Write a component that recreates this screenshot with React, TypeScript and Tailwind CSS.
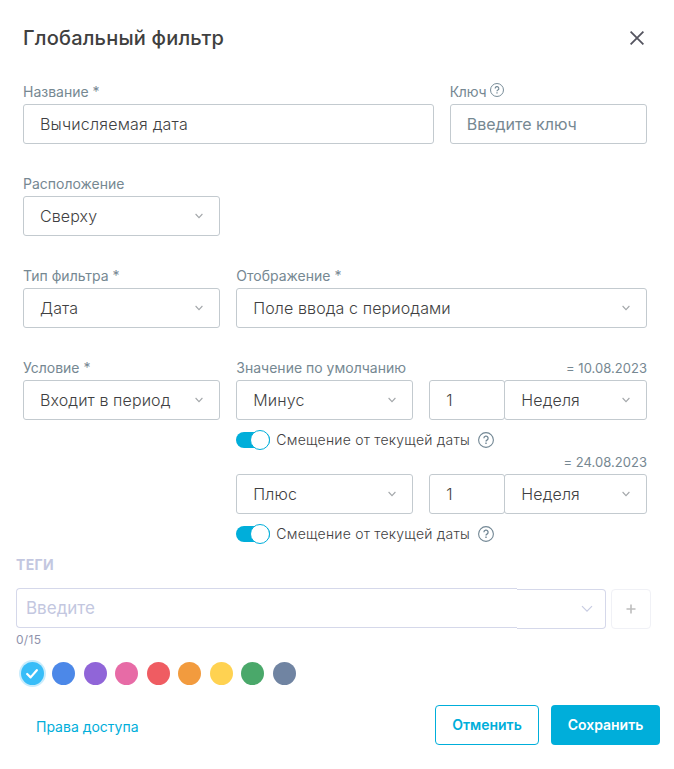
import type { ReactNode } from "react";
import clsx from "clsx";

const tagColors = [
  "bg-[#38bdf8]",
  "bg-[#4c88e8]",
  "bg-[#9065d8]",
  "bg-[#e76ba6]",
  "bg-[#ef5c62]",
  "bg-[#f29b3e]",
  "bg-[#ffd251]",
  "bg-[#4aa86a]",
  "bg-[#7084a2]",
];

interface FieldProps {
  label: ReactNode;
  hint?: string;
  className?: string;
  children: ReactNode;
}

function Field({ label, hint, className, children }: FieldProps) {
  return (
    <div className={className}>
      <div className="mb-0.5 flex h-5 items-center justify-between text-sm text-[#768892]">
        <span className="flex items-center">{label}</span>
        {hint && <span className="text-[13px] tracking-[0.03px]">{hint}</span>}
      </div>
      {children}
    </div>
  );
}

function Chevron() {
  return (
    <svg width="8" height="6" viewBox="0 0 8 6" fill="none" className="shrink-0">
      <path d="M.6 1L4 4.6 7.4 1" stroke="#a3a7aa" strokeWidth="1.1" />
    </svg>
  );
}

function Select({ value, className }: { value: string; className?: string }) {
  return (
    <button
      type="button"
      className={clsx(
        "flex h-10 items-center justify-between rounded-[3px] border border-[#c3cacf] pr-4 pl-4 text-base font-light tracking-[0.1px] whitespace-nowrap text-[#3f3f42]",
        className ?? "w-full"
      )}
    >
      {value}
      <Chevron />
    </button>
  );
}

function HelpIcon({ size }: { size: number }) {
  return (
    <svg width={size} height={size} viewBox="0 0 16 16" fill="none" stroke="#728794" className="shrink-0">
      <circle cx="8" cy="8" r="7.4" strokeWidth="1.1" />
      <path d="M5.9 6.3a2.1 2.1 0 1 1 3.1 1.8c-.7.4-1 .7-1 1.4" strokeWidth="1.3" />
      <path d="M8 10.6v1.4" strokeWidth="1.4" />
    </svg>
  );
}

function PeriodRow({ sign }: { sign: string }) {
  return (
    <>
      <div className="flex">
        <Select value={sign} className="w-[177px]" />
        <input
          defaultValue="1"
          className="ml-4 h-10 w-[76px] rounded-[3px] border border-[#c3cacf] px-4 text-base font-light text-[#3f3f42]"
        />
        <Select value="Неделя" className="-ml-px min-w-0 flex-1" />
      </div>
      <div className="mt-2.5 flex h-5 items-center text-sm font-light tracking-[0.22px] text-[#3f3f42]">
        <span className="mr-1.5 flex h-4 w-[34px] items-center justify-end rounded-full bg-[#00aeda]">
          <span className="size-5 shrink-0 rounded-full border border-[#00aeda] bg-white" />
        </span>
        Смещение от текущей даты
        <span className="ml-[7.5px]">
          <HelpIcon size={16} />
        </span>
      </div>
    </>
  );
}

function Tags() {
  return (
    <section className="px-4">
      <h3 className="text-sm leading-5 font-bold tracking-[0.3px] text-[#c3c7e0]">ТЕГИ</h3>
      <div className="mt-[13px] flex">
        <div className="flex h-10 w-[501px] items-center rounded-l-[4px] border border-r-0 border-[#d5d8ea] pt-0.5 pl-[9px] text-[17px] text-[#c3c7e0]">
          Введите
        </div>
        <div className="mt-px flex h-10 w-[89px] items-center justify-end rounded-r-[4px] border border-l-0 border-[#d5d8ea] pr-3">
          <svg width="12" height="8" viewBox="0 0 12 8" fill="none">
            <path d="M1 1.2l5 5 5-5" stroke="#c8cce2" strokeWidth="1.2" />
          </svg>
        </div>
        <button
          type="button"
          className="mt-px ml-[5px] flex size-10 items-center justify-center rounded-[4px] border border-[#f0f1f6]"
        >
          <svg width="10" height="10" viewBox="0 0 10 10" stroke="#bdbdbd" strokeWidth="1.6">
            <path d="M5 .5v9M.5 5h9" />
          </svg>
        </button>
      </div>
      <p className="mt-[3px] text-xs leading-4 tracking-[0.3px] text-[#8f93ad]">0/15</p>
      <div className="mt-3.5 ml-[4.5px] flex gap-[8.5px]">
        {tagColors.map((color, index) => (
          <span
            key={color}
            className={clsx(
              "flex size-[23px] items-center justify-center rounded-full",
              color,
              index === 0 && "ring-2 ring-[#c9ecfc]"
            )}
          >
            {index === 0 && (
              <svg width="12" height="10" viewBox="0 0 12 10" fill="none">
                <path d="M1.2 5l3.4 3.4L10.8 1.2" stroke="#fff" strokeWidth="2.2" strokeLinecap="round" strokeLinejoin="round" />
              </svg>
            )}
          </span>
        ))}
      </div>
    </section>
  );
}

export default function App() {
  return (
    <div className="h-[769px] w-[674px] overflow-hidden bg-white font-['Inter',sans-serif]">
      <header className="flex h-[82px] items-start justify-between pt-6 pr-[30px] pl-[23px]">
        <h2 className="text-xl leading-7 font-medium tracking-[0.2px] text-[#404040]">Глобальный фильтр</h2>
        <button type="button" aria-label="Закрыть" className="mt-[7px]">
          <svg width="14" height="14" viewBox="0 0 14 14" stroke="#54545f" strokeWidth="1.8">
            <path d="M.6.6l12.8 12.8M13.4.6L.6 13.4" />
          </svg>
        </button>
      </header>

      <form className="grid h-[473px] grid-cols-3 content-start gap-x-4 gap-y-[30px] pr-[27px] pl-[23px]">
        <Field label="Название *" className="col-span-2">
          <input
            defaultValue="Вычисляемая дата"
            className="block h-10 w-full rounded-[3px] border border-[#c3cacf] px-4 text-base font-light tracking-[0.2px] text-[#3f3f42]"
          />
        </Field>
        <Field
          label={
            <>
              <span className="tracking-[-0.2px]">Ключ</span>
              <span className="mb-1 ml-1">
                <HelpIcon size={14} />
              </span>
            </>
          }
        >
          <input
            placeholder="Введите ключ"
            className="block h-10 w-full rounded-[3px] border border-[#c3cacf] px-4 text-base placeholder:text-[#768892]"
          />
        </Field>

        <Field label="Расположение" className="col-span-3">
          <Select value="Сверху" className="w-[197px]" />
        </Field>

        <Field label="Тип фильтра *">
          <Select value="Дата" />
        </Field>
        <Field label="Отображение *" className="col-span-2">
          <Select value="Поле ввода с периодами" />
        </Field>

        <Field label="Условие *">
          <Select value="Входит в период" />
        </Field>
        <div className="col-span-2">
          <Field label="Значение по умолчанию" hint="= 10.08.2023">
            <PeriodRow sign="Минус" />
          </Field>
          <Field label="" hint="= 24.08.2023" className="mt-0.5">
            <PeriodRow sign="Плюс" />
          </Field>
        </div>
      </form>

      <Tags />

      <footer className="mt-5 flex items-center pr-3.5 pl-9 text-sm">
        <a href="#" className="mt-1 text-[#00aeda]">
          Права доступа
        </a>
        <button
          type="button"
          className="ml-auto h-10 w-[104px] rounded-[4px] border border-[#00aeda] font-semibold text-[#00aeda]"
        >
          Отменить
        </button>
        <button type="button" className="ml-3 h-10 w-[109px] rounded-[4px] bg-[#00aeda] font-semibold text-white">
          Сохранить
        </button>
      </footer>
    </div>
  );
}
